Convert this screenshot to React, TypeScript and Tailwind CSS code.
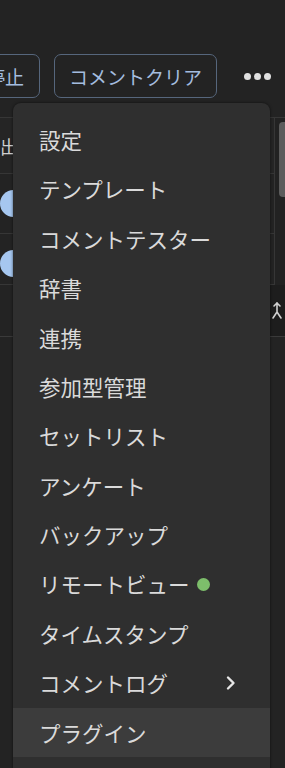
import React from "react";

const items = [
  "設定",
  "テンプレート",
  "コメントテスター",
  "辞書",
  "連携",
  "参加型管理",
  "セットリスト",
  "アンケート",
  "バックアップ",
  "リモートビュー",
  "タイムスタンプ",
  "コメントログ",
  "プラグイン",
];

export default function App() {
  const font = { fontFamily: '"Noto Sans CJK JP", "Noto Sans", sans-serif' };
  return (
    <div
      className="relative w-[285px] h-[768px] overflow-hidden bg-[#232323]"
      style={font}
    >
      {/* header with buttons */}
      <div className="h-[117px] pt-[54px]">
        <div className="flex items-center">
          <div className="ml-[-42px] h-[44px] w-[82px] shrink-0 rounded-[7px] border border-[#56667c] flex items-center justify-end pr-[15px] text-[19px] text-[#a3bcdf] leading-none">
            停止
          </div>
          <div className="ml-[14px] h-[44px] w-[163px] shrink-0 rounded-[7px] border border-[#56667c] flex items-center justify-center text-[19px] text-[#a3bcdf] leading-none">
            コメントクリア
          </div>
          <div className="ml-[27px] flex items-center gap-[3px]">
            <span className="block w-[7px] h-[7px] rounded-full bg-[#e0e0e0]" />
            <span className="block w-[7px] h-[7px] rounded-full bg-[#e0e0e0]" />
            <span className="block w-[7px] h-[7px] rounded-full bg-[#e0e0e0]" />
          </div>
        </div>
      </div>

      {/* table behind */}
      <div className="flex border-t border-[#363636]">
        <div className="flex-1">
          <div className="h-[56px] bg-[#252525] border-b border-[#363636] flex items-center">
            <span className="text-[18px] text-[#cfcfcf] leading-none">出</span>
          </div>
          <div className="h-[60px] border-b border-[#363636] flex items-center">
            <span className="block w-[27px] h-[27px] rounded-full bg-[#a6c7f0]" />
          </div>
          <div className="h-[51px] border-b border-[#363636] flex items-center">
            <span className="mt-[8px] block w-[27px] h-[27px] rounded-full bg-[#a6c7f0]" />
          </div>
        </div>
        <div className="relative w-[11px] border-l border-[#363636] bg-[#222222]">
          <div className="absolute left-[4px] top-[4px] w-[8px] h-[75px] rounded-l-[4px] bg-[#5c5c5c]" />
        </div>
      </div>
      <div className="flex h-[52px] border-b border-[#3a3a3a]">
        <div className="flex-1" />
        <div className="w-[15px] bg-[#1d1d1d] flex items-center justify-start pl-[1px]">
          <svg width="12" height="20" viewBox="0 0 12 20" fill="none" stroke="#d0d0d0" strokeWidth="1.6" strokeLinecap="round" strokeLinejoin="round">
            <path d="M6 2 V11 L2 17 M6 11 L10 17" />
            <path d="M3 5 L6 2 L9 5" />
          </svg>
        </div>
      </div>

      {/* dropdown menu */}
      <div className="absolute left-[13px] top-[103px] w-[257px] h-[700px] rounded-[8px] bg-[#2f2f2f] pt-[12px] shadow-[0_0_3px_rgba(0,0,0,0.6)]">
        {items.map((label, i) => (
          <div
            key={label}
            className={
              "h-[49.4px] flex items-center pl-[26px] pr-[34px] text-[21.5px] leading-none text-[#dadada] " +
              (i === 12 ? "bg-[#3c3c3c]" : "")
            }
          >
            <span>{label}</span>
            {label === "リモートビュー" && (
              <span className="ml-[7px] block w-[13px] h-[13px] rounded-full bg-[#7dbe6b]" />
            )}
            {label === "コメントログ" && (
              <svg className="ml-auto" width="11" height="16" viewBox="0 0 11 16" fill="none" stroke="#e6e6e6" strokeWidth="2.4" strokeLinecap="round" strokeLinejoin="round">
                <path d="M3 2.5 L8.5 8 L3 13.5" />
              </svg>
            )}
          </div>
        ))}
      </div>
    </div>
  );
}
